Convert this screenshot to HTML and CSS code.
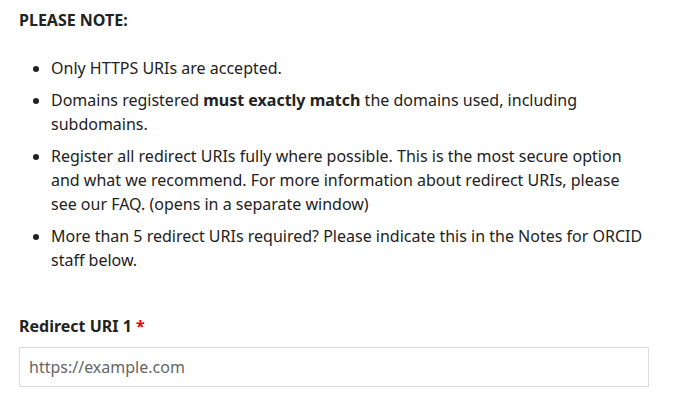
FILE: index.html
```html
<!DOCTYPE html>
<html lang="en">
<head>
<meta charset="utf-8">
<link rel="stylesheet" href="styles.css">
</head>
<body>
<div class="page">
  <p class="note-title">PLEASE NOTE:</p>
  <ul class="notes">
    <li>Only HTTPS URIs are accepted.</li>
    <li>Domains registered <strong>must exactly match</strong> the domains used, including subdomains.</li>
    <li>Register all redirect URIs fully where possible. This is the most secure option and what we recommend. For more information about redirect URIs, please see our FAQ. (opens in a separate window)</li>
    <li>More than 5 redirect URIs required? Please indicate this in the Notes for ORCID staff below.</li>
  </ul>
  <div class="field">
    <label class="field-label" for="uri1">Redirect URI 1 <span class="req">*</span></label>
    <input class="field-input" id="uri1" type="text" placeholder="https://example.com">
  </div>
</div>
</body>
</html>
```
FILE: styles.css
```css
html, body {
  margin: 0;
  padding: 0;
  background: #fff;
}
body {
  font-family: "Noto Sans", "Open Sans", sans-serif;
  color: #222;
}
.page {
  padding: 8px 27px 0 19px;
}
.note-title {
  margin: 0;
  font-size: 16px;
  font-weight: 700;
  line-height: 24px;
}
.notes {
  margin: 24px 0 0 0;
  padding: 0 0 0 32px;
  font-size: 16px;
  line-height: 24px;
}
.notes li {
  margin-bottom: 8px;
}
.field {
  margin-top: 42px;
  display: flex;
  flex-direction: column;
}
.field-label {
  font-size: 16px;
  font-weight: 700;
  line-height: 24px;
  margin-bottom: 9px;
}
.req {
  color: #e00;
}
.field-input {
  box-sizing: border-box;
  width: 630px;
  height: 40px;
  border: 1px solid #ddd;
  padding: 0 9px;
  font-family: "Noto Sans", "Open Sans", sans-serif;
  font-size: 16px;
  color: #222;
  outline: none;
}
.field-input::placeholder {
  color: #666;
}
```
